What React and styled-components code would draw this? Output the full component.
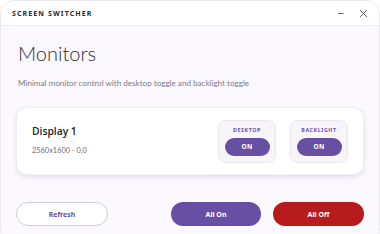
import React from "react";
import styled, { createGlobalStyle } from "styled-components";

const Global = createGlobalStyle`
  html, body { margin: 0; padding: 0; background: #ffffff; overflow: hidden; }
  body { font-family: "Open Sans", "Noto Sans", sans-serif; }
  * { box-sizing: border-box; }
`;

const Window = styled.div`
  width: 380px;
  height: 244px;
  background: #fbf9fe;
  border-radius: 14px;
  border: 1px solid #ece8f2;
  overflow: hidden;
  display: flex;
  flex-direction: column;
`;

const TitleBar = styled.div`
  height: 25px;
  flex: none;
  background: #ffffff;
  border-bottom: 1px solid #f1eef5;
  display: flex;
  align-items: center;
  padding: 0 0 0 11px;
`;

const AppName = styled.div`
  font-family: "Noto Sans", sans-serif;
  font-size: 7px;
  font-weight: 700;
  letter-spacing: 1.1px;
  color: #2a2a33;
  flex: 1;
`;

const WinButton = styled.button`
  width: 22px;
  height: 24px;
  border: 0;
  background: transparent;
  padding: 0;
  display: flex;
  align-items: center;
  justify-content: center;
  color: #555;
`;

const Content = styled.div`
  padding: 13px 15px 0 15px;
  display: flex;
  flex-direction: column;
`;

const Heading = styled.h1`
  margin: 0 0 0 2px;
  font-family: "Lato", sans-serif;
  font-weight: 300;
  font-size: 20px;
  line-height: 28px;
  color: #2b2b33;
`;

const Subtitle = styled.p`
  margin: 10px 0 0 2px;
  font-family: "Lato", sans-serif;
  font-size: 8.1px;
  line-height: 12px;
  color: #7b7a86;
`;

const Card = styled.div`
  margin-top: 18px;
  height: 68px;
  background: #ffffff;
  border-radius: 11px;
  border: 1px solid #efecf4;
  box-shadow: 0 2px 5px rgba(60, 40, 90, 0.12);
  display: flex;
  align-items: center;
  padding: 0 15px 0 15px;
`;

const Info = styled.div`
  flex: 1;
  display: flex;
  flex-direction: column;
`;

const DisplayName = styled.div`
  font-size: 10.3px;
  font-weight: 600;
  color: #22222a;
  line-height: 14px;
  margin-top: -3px;
`;

const Res = styled.div`
  margin-top: 8px;
  font-family: "Lato", sans-serif;
  font-size: 7.4px;
  color: #6f6e78;
  line-height: 10px;
`;

const Toggles = styled.div`
  display: flex;
  gap: 14px;
`;

const ToggleBox = styled.div`
  width: 58px;
  height: 43px;
  background: #f7f5fa;
  border: 1px solid #ebe7f1;
  border-radius: 8px;
  display: flex;
  flex-direction: column;
  align-items: center;
  padding-top: 5px;
`;

const ToggleLabel = styled.div`
  font-family: "Noto Sans", sans-serif;
  font-size: 5.3px;
  font-weight: 700;
  letter-spacing: 0.6px;
  color: #6a52a3;
  line-height: 8px;
`;

const OnPill = styled.button`
  margin-top: 4px;
  width: 45px;
  height: 18px;
  border-radius: 9px;
  border: 0;
  background: #6750a4;
  color: #ffffff;
  font-family: "Noto Sans", sans-serif;
  font-size: 6.5px;
  font-weight: 700;
  letter-spacing: 0.3px;
  padding: 0;
`;

const Footer = styled.div`
  margin-top: 27px;
  display: flex;
  align-items: center;
`;

const Btn = styled.button`
  width: ${(p) => p.$w}px;
  height: 24px;
  border-radius: 12px;
  border: ${(p) => (p.$variant === "outline" ? "1px solid #d3c9e1" : "0")};
  background: ${(p) =>
    p.$variant === "outline" ? "#ffffff" : p.$variant === "danger" ? "#b71c1c" : "#6750a4"};
  color: ${(p) => (p.$variant === "outline" ? "#6750a4" : "#ffffff")};
  font-family: "Noto Sans", sans-serif;
  font-size: 7px;
  font-weight: 700;
  padding: 0;
  margin-left: ${(p) => p.$ml || 0}px;
`;

const Spacer = styled.div`
  flex: 1;
`;

export default function App() {
  return (
    <>
      <Global />
      <Window>
        <TitleBar>
          <AppName>SCREEN SWITCHER</AppName>
          <WinButton aria-label="minimize">
            <svg width="8" height="8" viewBox="0 0 8 8">
              <path d="M1.5 4.5h5" stroke="#555" strokeWidth="0.9" />
            </svg>
          </WinButton>
          <WinButton aria-label="close" style={{ marginRight: 5 }}>
            <svg width="9" height="9" viewBox="0 0 9 9">
              <path d="M1 1l7 7M8 1L1 8" stroke="#555" strokeWidth="0.9" />
            </svg>
          </WinButton>
        </TitleBar>
        <Content>
          <Heading>Monitors</Heading>
          <Subtitle>Minimal monitor control with desktop toggle and backlight toggle</Subtitle>
          <Card>
            <Info>
              <DisplayName>Display 1</DisplayName>
              <Res>2560x1600 - 0,0</Res>
            </Info>
            <Toggles>
              <ToggleBox>
                <ToggleLabel>DESKTOP</ToggleLabel>
                <OnPill>ON</OnPill>
              </ToggleBox>
              <ToggleBox>
                <ToggleLabel>BACKLIGHT</ToggleLabel>
                <OnPill>ON</OnPill>
              </ToggleBox>
            </Toggles>
          </Card>
          <Footer>
            <Btn $variant="outline" $w={92}>Refresh</Btn>
            <Spacer />
            <Btn $w={90}>All On</Btn>
            <Btn $variant="danger" $w={91} $ml={12}>All Off</Btn>
          </Footer>
        </Content>
      </Window>
    </>
  );
}
